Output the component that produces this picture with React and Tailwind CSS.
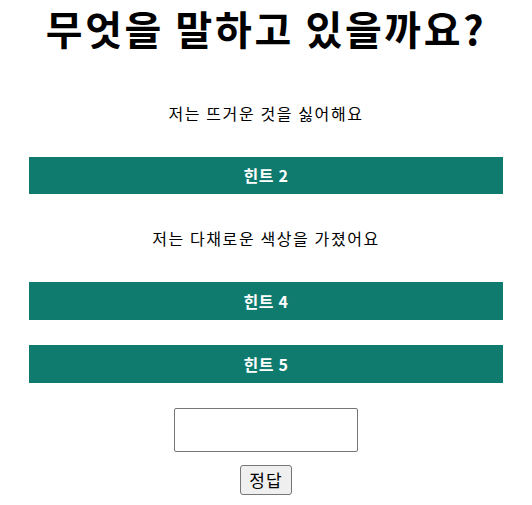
import React, { useState } from 'react';

const HINTS = [
  { id: 1, text: '저는 뜨거운 것을 싫어해요', open: true },
  { id: 2, text: '', open: false },
  { id: 3, text: '저는 다채로운 색상을 가졌어요', open: true },
  { id: 4, text: '', open: false },
  { id: 5, text: '', open: false },
];

const App = () => {
  const [answer, setAnswer] = useState('');

  return (
    <div
      className="w-[532px] min-h-[505px] bg-white text-black"
      style={{ fontFamily: '"Noto Sans CJK KR", "Noto Sans", sans-serif' }}
    >
      <h1 className="pt-[2px] h-[94px] text-center text-[40px] font-bold leading-[52px] tracking-[2.6px] whitespace-nowrap">
        무엇을 말하고 있을까요?
      </h1>

      <div className="flex flex-col gap-[25.5px] px-[29px]">
        {HINTS.map((hint) =>
          hint.open ? (
            <div key={hint.id} className="h-[37px] flex items-center justify-center text-base tracking-[1.6px]">
              {hint.text}
            </div>
          ) : (
            <button
              key={hint.id}
              className="h-[37.5px] w-full bg-[#0f7b6f] text-white text-base font-bold tracking-[0.6px] flex items-center justify-center"
            >
              힌트 {hint.id}
            </button>
          )
        )}
      </div>

      <div className="flex flex-col items-center mt-[25px]">
        <input
          value={answer}
          onChange={(e) => setAnswer(e.target.value)}
          className="w-[184px] h-[44px] border border-[#767676] rounded-[2px] px-2 text-base"
        />
        <button className="mt-[13px] h-[30px] px-[8px] bg-[#efefef] border border-[#767676] rounded-[3px] text-[17px] tracking-[1px] leading-none">
          정답
        </button>
      </div>
    </div>
  );
};

export default App;
